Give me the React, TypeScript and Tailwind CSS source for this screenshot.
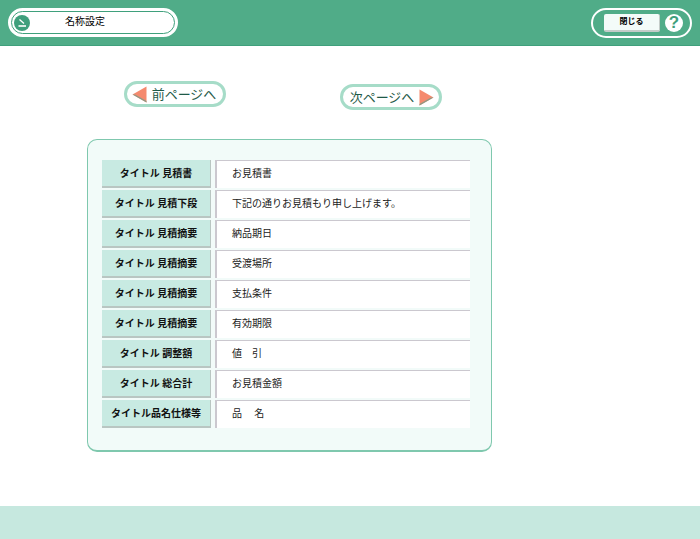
const FONT = "font-['Noto_Sans_CJK_JP','Liberation_Sans',sans-serif]";

const ROWS = [
  { label: 'タイトル 見積書', value: 'お見積書' },
  { label: 'タイトル 見積下段', value: '下記の通りお見積もり申し上げます。' },
  { label: 'タイトル 見積摘要', value: '納品期日' },
  { label: 'タイトル 見積摘要', value: '受渡場所' },
  { label: 'タイトル 見積摘要', value: '支払条件' },
  { label: 'タイトル 見積摘要', value: '有効期限' },
  { label: 'タイトル 調整額', value: '値　引' },
  { label: 'タイトル 総合計', value: 'お見積金額' },
  { label: 'タイトル品名仕様等', value: '品　 名' },
];

const PageButton = ({ label, dir }: { label: string; dir: 'prev' | 'next' }) => (
  <button
    className={`flex h-[26px] w-[102px] items-center justify-center gap-[5px] rounded-full border-[3px] border-[#a6dcc8] bg-white text-[13px] leading-none text-[#1f5a48] ${dir === 'prev' ? 'pr-[2px]' : 'pl-[2px]'}`}
  >
    {dir === 'prev' && (
      <svg width="15" height="17" viewBox="0 0 15 17">
        <path d="M14.5 0.5V16.5L0.5 8.5Z" fill="#f58a6e" />
        <path d="M0.5 8.5L14.5 16.5V15L3 8.5Z" fill="#8c9a86" />
      </svg>
    )}
    <span className="pb-[2px]">{label}</span>
    {dir === 'next' && (
      <svg width="15" height="17" viewBox="0 0 15 17">
        <path d="M0.5 0.5V16.5L14.5 8.5Z" fill="#f58a6e" />
        <path d="M14.5 8.5L0.5 16.5V15L12 8.5Z" fill="#8c9a86" />
      </svg>
    )}
  </button>
);

export default function App() {
  return (
    <div className={`flex h-[539px] w-[700px] flex-col overflow-hidden bg-white ${FONT}`}>
      <header className="flex h-[46px] shrink-0 items-center justify-between border-b border-[#3fa07c] bg-[#50ac88] pl-[8px] pr-[8px]">
        <div className="flex h-[29px] w-[170px] items-center rounded-full border-[2px] border-white bg-white p-[1px]">
          <div className="flex h-full w-full items-center rounded-full border-[1.5px] border-[#3fa07c] bg-white pl-[2px]">
            <div className="flex h-[16px] w-[16px] items-center justify-center rounded-full bg-[#3f9f7c]">
              <svg width="10" height="10" viewBox="0 0 10 10">
                <path d="M2.5 1.5L7 5.5" stroke="#fff" strokeWidth="1.4" fill="none" />
                <path d="M1.5 8H9" stroke="#fff" strokeWidth="1.6" fill="none" />
              </svg>
            </div>
            <span className="ml-[35px] pb-[4px] text-[10px] leading-none text-black">名称設定</span>
          </div>
        </div>
        <div className="flex h-[30px] w-[101px] items-center gap-[5px] rounded-full border-[2px] border-white pl-[11px]">
          <button className="flex h-[18px] w-[56px] items-center justify-center rounded-[2px] border-b-2 border-r border-[#c4ccc9] bg-[#f3fbf9] pb-[1px] text-[8px] leading-none font-bold text-black">
            閉じる
          </button>
          <div className="flex h-[18px] w-[18px] items-center justify-center rounded-full bg-white text-[17px] leading-none font-bold text-[#3f9f7c] font-['Liberation_Sans']">
            ?
          </div>
        </div>
      </header>

      <main className="min-h-0 flex-1">
        <div className="flex items-start pt-[35px] pl-[124px]">
          <PageButton label="前ページへ" dir="prev" />
          <div className="ml-[114px] mt-[3px]">
            <PageButton label="次ページへ" dir="next" />
          </div>
        </div>

        <section className="ml-[87px] mt-[29px] flex h-[313px] w-[405px] flex-col gap-[2px] rounded-[10px] border border-b-2 border-[#7fc8ae] bg-[#f2fbf9] pl-[14px] pt-[20px]">
          {ROWS.map((row, i) => (
            <div key={i} className="flex h-[28px] items-stretch">
              <div className="flex w-[109px] items-center justify-center whitespace-nowrap border-b-2 border-r border-[#b9c6c2] bg-[#c8eae2] text-[10px] leading-none font-bold text-[#111]">
                {row.label}
              </div>
              <div className="ml-[4px] flex w-[255px] items-center whitespace-pre border-l-2 border-t border-[#cbc8cf] bg-white pb-[3px] pl-[15px] text-[10px] leading-none text-[#222]">
                {row.value}
              </div>
            </div>
          ))}
        </section>
      </main>

      <footer className="h-[33px] shrink-0 bg-[#c6e8df]" />
    </div>
  );
}
